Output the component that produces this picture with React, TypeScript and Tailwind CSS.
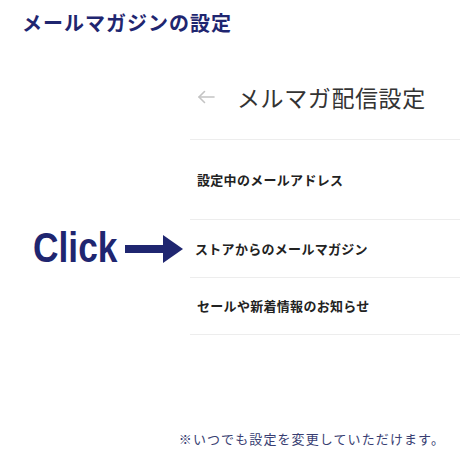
const jp = { fontFamily: '"Noto Sans CJK JP", "Noto Sans", sans-serif' };

function BackArrow() {
  return (
    <svg width="18" height="14" viewBox="0 0 18 14" fill="none" stroke="#c4c4c4" strokeWidth="1.6" strokeLinecap="round" strokeLinejoin="round">
      <path d="M17 7H2" />
      <path d="M7.5 1.5L2 7l5.5 5.5" />
    </svg>
  );
}

function BigArrow() {
  return (
    <svg width="58" height="28" viewBox="0 0 58 28">
      <rect x="0" y="10" width="40" height="8" fill="#1f2670" />
      <path d="M38 0L58 14L38 28Z" fill="#1f2670" />
    </svg>
  );
}

export default function App() {
  return (
    <div className="w-[460px] h-[460px] bg-white flex flex-col" style={jp}>
      <div className="pl-[22px] pt-[8px] h-[40px] text-[20px] font-bold tracking-[1px] text-[#1f2670]">
        メールマガジンの設定
      </div>

      <div className="grid grid-cols-[190px_1fr]">
        {/* header */}
        <div />
        <div className="h-[100px] flex items-end pb-[28px] border-b border-[#ededed]">
          <div className="flex items-center">
            <span className="ml-[7px] mr-[22px] flex"><BackArrow /></span>
            <span className="text-[23px] leading-[28px] tracking-[0.6px] text-[#333333]">メルマガ配信設定</span>
          </div>
        </div>

        {/* row 1 */}
        <div />
        <div className="h-[80px] flex items-center pl-[7px] border-b border-[#ededed] text-[13px] font-bold tracking-[0.3px] text-[#222222]">
          設定中のメールアドレス
        </div>

        {/* row 2 */}
        <div className="flex items-center justify-end pr-[7px] gap-[8px]">
          <span
            className="text-[42px] leading-none font-bold text-[#1f2670] scale-x-[0.84] origin-right -mt-[2px]"
            style={{ fontFamily: '"Liberation Sans", Arial, sans-serif' }}
          >
            Click
          </span>
          <BigArrow />
        </div>
        <div className="h-[58px] flex items-center pl-[5px] border-b border-[#ededed] text-[13px] font-bold tracking-[0.3px] text-[#222222]">
          ストアからのメールマガジン
        </div>

        {/* row 3 */}
        <div />
        <div className="h-[57px] flex items-center pl-[7px] border-b border-[#ededed] text-[13px] font-bold tracking-[0.3px] text-[#222222]">
          セールや新着情報のお知らせ
        </div>
      </div>

      <div className="mt-[94px] pr-[15px] text-right text-[13px] tracking-[1.1px] text-[#383e72]">
        ※いつでも設定を変更していただけます。
      </div>
    </div>
  );
}
